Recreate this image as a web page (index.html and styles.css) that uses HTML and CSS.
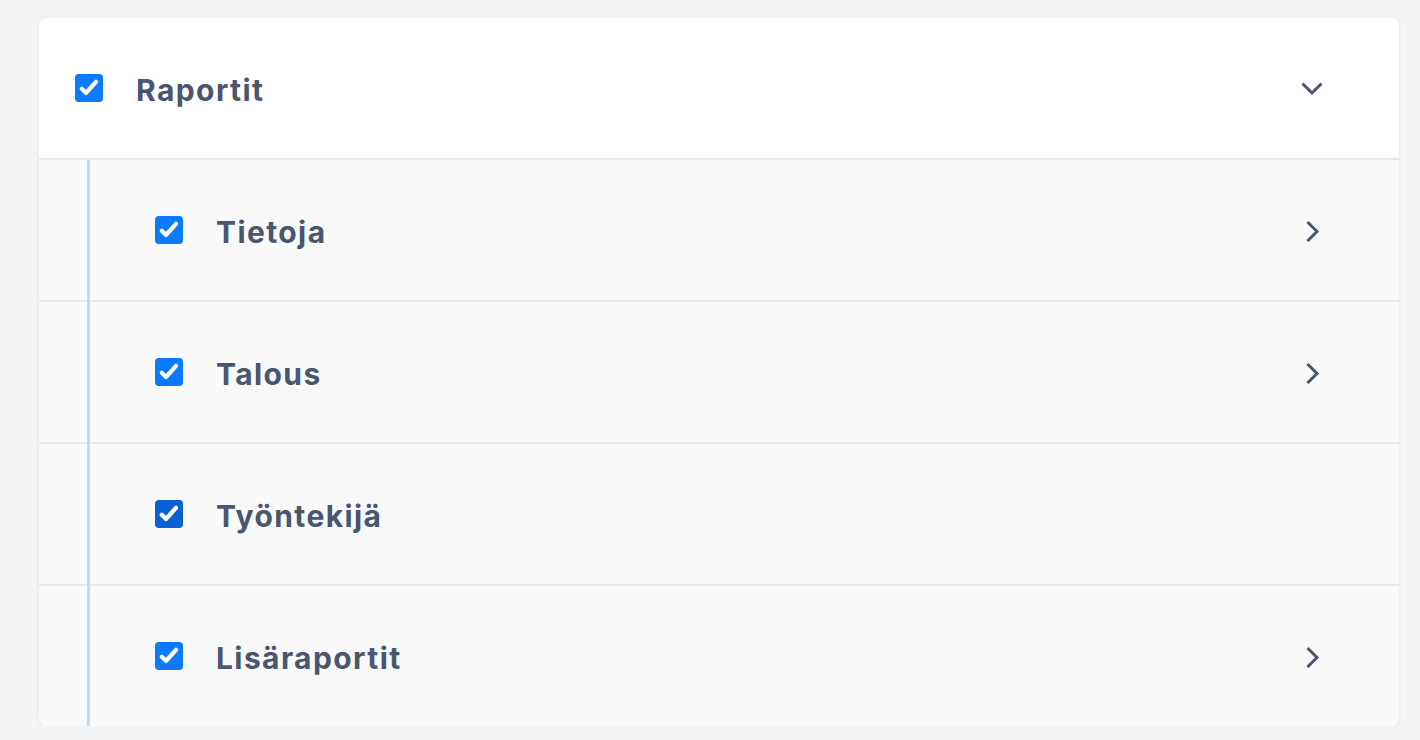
FILE: index.html
```html
<!DOCTYPE html>
<html lang="fi">
<head>
<meta charset="utf-8">
<title>Raportit</title>
<link rel="stylesheet" href="styles.css">
</head>
<body>
<div class="page">
  <section class="card">
    <div class="row row-head">
      <span class="check"><svg viewBox="0 0 28 28"><path d="M6.8 14.8 L11 19 L21 7.8"/></svg></span>
      <span class="label">Raportit</span>
      <svg class="chev" viewBox="0 0 24 24"><path d="M3.5 8.5 L12 17 L20.5 8.5"/></svg>
    </div>
    <div class="children">
      <div class="row row-sub">
        <span class="check"><svg viewBox="0 0 28 28"><path d="M6.8 14.8 L11 19 L21 7.8"/></svg></span>
        <span class="label">Tietoja</span>
        <svg class="chev" viewBox="0 0 24 24"><path d="M8.5 5 L17 13.5 L8.5 22"/></svg>
      </div>
      <div class="row row-sub">
        <span class="check"><svg viewBox="0 0 28 28"><path d="M6.8 14.8 L11 19 L21 7.8"/></svg></span>
        <span class="label">Talous</span>
        <svg class="chev" viewBox="0 0 24 24"><path d="M8.5 5 L17 13.5 L8.5 22"/></svg>
      </div>
      <div class="row row-sub">
        <span class="check check-active"><svg viewBox="0 0 28 28"><path d="M6.8 14.8 L11 19 L21 7.8"/></svg></span>
        <span class="label">Työntekijä</span>
      </div>
      <div class="row row-sub">
        <span class="check"><svg viewBox="0 0 28 28"><path d="M6.8 14.8 L11 19 L21 7.8"/></svg></span>
        <span class="label">Lisäraportit</span>
        <svg class="chev" viewBox="0 0 24 24"><path d="M8.5 5 L17 13.5 L8.5 22"/></svg>
      </div>
    </div>
  </section>
</div>
</body>
</html>
```

FILE: styles.css
```css
* { box-sizing: border-box; }
html, body {
  margin: 0;
  padding: 0;
  background: #f3f4f6;
  font-family: Inter, "Noto Sans", "Liberation Sans", sans-serif;
}
.page {
  padding: 18px 21px 0 39px;
}
.card {
  background: #ffffff;
  border-radius: 8px;
  box-shadow: 0 1px 4px rgba(20, 30, 50, 0.07);
  overflow: hidden;
  width: 1360px;
}
.row {
  display: flex;
  align-items: center;
  height: 142px;
  padding-right: 75px;
  border-bottom: 2px solid #e5e9ee;
}
.row-head {
  background: #ffffff;
  padding-left: 36px;
}
.children {
  position: relative;
  background: #f9f9fa;
}
.children::before {
  content: "";
  position: absolute;
  left: 48px;
  top: 0;
  bottom: 0;
  width: 3px;
  background: #bcdeef;
}
.row-sub {
  padding-left: 116px;
}
.row-sub:last-child {
  border-bottom: 0;
  height: 140px;
}
.check {
  flex: none;
  width: 28px;
  height: 28px;
  border-radius: 4px;
  background: #0b7aff;
  display: flex;
}
.check-active {
  background: #0a5fd2;
}
.check svg {
  width: 28px;
  height: 28px;
  fill: none;
  stroke: #ffffff;
  stroke-width: 4.2;
  stroke-linecap: round;
  stroke-linejoin: round;
}
.label {
  flex: 1;
  margin-left: 33px;
  padding-top: 3px;
  font-size: 30px;
  font-weight: 700;
  letter-spacing: 1.4px;
  color: #4a5670;
}
.chev {
  flex: none;
  width: 24px;
  height: 24px;
  fill: none;
  stroke: #4a5670;
  stroke-width: 3;
  stroke-linecap: square;
  stroke-linejoin: miter;
}
```
